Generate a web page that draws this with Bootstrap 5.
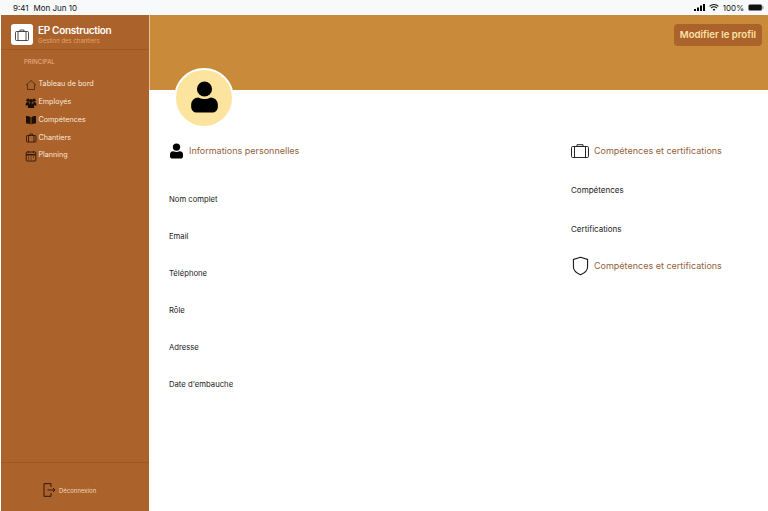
<!DOCTYPE html>
<html lang="fr">

<head>
  <meta charset="UTF-8" />
  <meta name="viewport" content="width=device-width, initial-scale=1.0" />
  <title>Profil employé</title>
  <link href="https://cdn.jsdelivr.net/npm/bootstrap@5.3.3/dist/css/bootstrap.min.css" rel="stylesheet" />
  <style>
    html, body { height: 100%; overflow: hidden; }
    body { font-family: Inter, "Liberation Sans", sans-serif; background: #fff; color: #000; }
    .status-bar { height: 15px; padding: 0 4px 0 13px; background: #f8f9fb; font-size: 8px; color: #111; }
    .status-date { gap: 5px; }
    .app-shell { height: 496px; padding-left: 1px; }
    .side-panel { width: 148px; background: #ac622b; color: #fff; }
    .brand-area { height: 35px; padding: 9px 0 0 10px; border-bottom: 1px solid #a4561f; gap: 5px; }
    .brand-logo { width: 22px; height: 21px; background: #fff; border-radius: 3px; }
    .brand-name { font-size: 10px; font-weight: 600; line-height: 13px; letter-spacing: -.3px; }
    .brand-sub { font-size: 6px; line-height: 8px; color: #e2a36a; }
    .side-title { font-size: 6px; color: #e8b58c; padding: 7px 0 0 23px; height: 26px; }
    .side-link { height: 17.7px; padding-left: 24px; font-size: 7.2px; color: #f8e8da; text-decoration: none; gap: 1.5px; }
    .side-link svg { width: 12px; height: 12px; flex: none; }
    .side-foot { height: 49px; border-top: 1px solid #a4561f; padding: 19px 0 0 42px; font-size: 6px; color: #f0d5bd; gap: 3px; }
    .side-foot svg { margin-top: 1px; }
    .main-area { min-width: 0; }
    .top-band { height: 75px; background: #c98a39; padding: 9px 6px 0 0; border-left: 1px solid #e5c79d; }
    .edit-btn { height: 22px; padding: 0 6px; font-size: 9.6px; font-weight: 600; color: #fde3a7; background: #ac622b; border: 0; border-radius: 4px; line-height: 22px; }
    .avatar-disc { width: 60px; height: 60px; margin: -22px 0 0 25px; padding-bottom: 2px; background: #fde49e; border: 2px solid #fff; border-radius: 50%; }
    .info-cols { padding: 0 0 0 20px; }
    .col-left { width: 402px; }
    .section-head { font-size: 9px; color: #94613b; gap: 5px; height: 20px; margin-top: 13px; }
    .head-first { margin-bottom: 33px; }
    .col-right .head-first { margin-bottom: 23px; }
    .col-right .section-head + .field-label { height: 38.5px; }
    .col-right .field-label + .section-head { margin-top: -3.5px; }
    .field-label { font-size: 8px; height: 37px; line-height: 12px; color: #1a1a1a; }
    .col-left .field-label { font-size: 7.7px; }
    .head-person svg { margin: 0 1px; }
    .head-shield svg { margin-left: 1px; }
  </style>
</head>

<body>
  <div class="status-bar d-flex align-items-center justify-content-between">
    <div class="status-date d-flex"><span>9:41</span><span>Mon Jun 10</span></div>
    <div class="d-flex align-items-center gap-1">
      <svg width="11" height="7" viewBox="0 0 11 7"><rect x="0" y="5" width="2" height="2" /><rect x="3" y="3.500" width="2" height="3.500" /><rect x="6" y="1.500" width="2" height="5.500" /><rect x="9" y="0" width="2" height="7" /></svg>
      <svg width="10" height="7" viewBox="0 0 10 7" fill="none" stroke="#111" stroke-width="1.100"><path d="M.6 2.400a6.200 6.200 0 0 1 8.800 0M2.200 4a3.900 3.900 0 0 1 5.600 0" /><path d="M5 7 3.700 5.400a1.900 1.900 0 0 1 2.600 0z" fill="#111" stroke="none" /></svg>
      <span>100%</span>
      <svg width="16" height="7" viewBox="0 0 16 7"><rect x=".5" y=".5" width="13.500" height="6" rx="1.500" fill="#111" stroke="#888" stroke-width=".6" /><rect x="14.500" y="2.300" width="1" height="2.400" fill="#888" /></svg>
    </div>
  </div>

  <div class="app-shell d-flex">
    <aside class="side-panel d-flex flex-column">
      <div class="brand-area d-flex">
        <div class="brand-logo d-flex align-items-center justify-content-center">
          <svg width="14" height="12" viewBox="0 0 14 12" fill="none" stroke="#222" stroke-width=".8"><rect x=".5" y="2.500" width="13" height="9" rx="1" /><path d="M3 2.500v9M11 2.500v9M5 2.500V1h4v1.500" /></svg>
        </div>
        <div>
          <div class="brand-name">EP Construction</div>
          <div class="brand-sub">Gestion des chantiers</div>
        </div>
      </div>
      <div class="side-title">PRINCIPAL</div>
      <a class="side-link d-flex align-items-center" href="#">
        <svg viewBox="0 0 12 12" fill="none" stroke="#3d2514" stroke-width=".8"><path d="M1 6.200 6 1.500l5 4.700M2.500 5.500v5h7v-5" /></svg>Tableau de bord
      </a>
      <a class="side-link d-flex align-items-center" href="#">
        <svg viewBox="0 0 12 12" fill="#1c1008"><circle cx="3" cy="3.200" r="1.600" /><circle cx="9" cy="3.200" r="1.600" /><circle cx="6" cy="4" r="1.900" /><path d="M.5 8.500c0-2.500 1-3.500 2.500-3.500S4 6 4 8.500H.5zM8 8.500c0-2.500.5-3.500 1-3.500 1.500 0 2.500 1 2.500 3.500H8z" /><path d="M2.800 11c0-3.500 1.200-5 3.200-5s3.200 1.500 3.200 5H2.800z" /></svg>Employés
      </a>
      <a class="side-link d-flex align-items-center" href="#">
        <svg viewBox="0 0 12 12" fill="#1c1008"><path d="M1 2c2 0 3.800.3 4.600 1.200V10.500C4.500 9.700 3 9.500 1 9.500zM11 2c-2 0-3.800.3-4.600 1.200V10.500c1.100-.8 2.600-1 4.600-1z" /></svg>Compétences
      </a>
      <a class="side-link d-flex align-items-center" href="#">
        <svg viewBox="0 0 12 12" fill="none" stroke="#2c1a0d" stroke-width=".9"><rect x="1.500" y="3.500" width="9.500" height="6.500" rx=".7" /><path d="M3.500 3.500v6.500M9 3.500v6.500M4.800 3.500V2h2.900v1.500" /></svg>Chantiers
      </a>
      <a class="side-link d-flex align-items-center" href="#">
        <svg viewBox="0 0 12 12" fill="none" stroke="#2c1a0d" stroke-width=".9"><rect x="1.200" y="2" width="9.600" height="9" rx=".7" /><path d="M1.200 4.700h9.600" stroke-width="1.500" /><path d="M3.500 1v2M8.500 1v2M3 7h1M5.500 7h1M8 7h1M3 9h1M5.500 9h1" /></svg>Planning
      </a>
      <div class="side-foot d-flex align-items-start mt-auto">
        <svg width="13" height="14" viewBox="0 0 13 14" fill="none" stroke="#2c1a0d" stroke-width="1"><path d="M8 4V.7H1v12.600h7V10" /><path d="M4.500 7h7.500M10 5l2 2-2 2" /></svg>
        <span class="pt-1">Déconnexion</span>
      </div>
    </aside>

    <main class="main-area flex-grow-1">
      <div class="top-band d-flex justify-content-end align-items-start">
        <button type="button" class="edit-btn">Modifier le profil</button>
      </div>
      <div class="avatar-disc d-flex align-items-center justify-content-center position-relative">
        <svg width="27" height="32" viewBox="0 0 30 36"><circle cx="15" cy="9" r="8.500" /><path d="M8 18.500q7 3.500 14 0a8 8 0 0 1 8 8v3a6 6 0 0 1-6 6H6a6 6 0 0 1-6-6v-3a8 8 0 0 1 8-8z" /></svg>
      </div>
      <div class="info-cols d-flex">
        <section class="col-left">
          <div class="section-head head-first head-person d-flex align-items-center">
            <svg width="13" height="16" viewBox="0 0 30 36"><circle cx="15" cy="9" r="8.500" /><path d="M8 18.500q7 3.500 14 0a8 8 0 0 1 8 8v3a6 6 0 0 1-6 6H6a6 6 0 0 1-6-6v-3a8 8 0 0 1 8-8z" /></svg>
            <span>Informations personnelles</span>
          </div>
          <div class="field-label">Nom complet</div>
          <div class="field-label">Email</div>
          <div class="field-label">Téléphone</div>
          <div class="field-label">Rôle</div>
          <div class="field-label">Adresse</div>
          <div class="field-label">Date d'embauche</div>
        </section>
        <section class="col-right">
          <div class="section-head head-first d-flex align-items-center">
            <svg width="18" height="14" viewBox="0 0 18 14" fill="none" stroke="#111" stroke-width=".9"><rect x=".5" y="2.500" width="17" height="11" rx="1.200" /><path d="M3.500 2.500v11M14.500 2.500v11M6 2.500V.7h6v1.800" /></svg>
            <span>Compétences et certifications</span>
          </div>
          <div class="field-label">Compétences</div>
          <div class="field-label">Certifications</div>
          <div class="section-head head-shield d-flex align-items-center">
            <svg width="17" height="20" viewBox="0 0 18 20" fill="none" stroke="#111" stroke-width="1.100"><path d="M9 .8 16.500 3v8c0 4-3.500 6.500-7.500 8.200C5 17.500 1.500 15 1.500 11V3z" /></svg>
            <span>Compétences et certifications</span>
          </div>
        </section>
      </div>
    </main>
  </div>

  <script src="https://cdn.jsdelivr.net/npm/bootstrap@5.3.3/dist/js/bootstrap.bundle.min.js"></script>
</body>

</html>
